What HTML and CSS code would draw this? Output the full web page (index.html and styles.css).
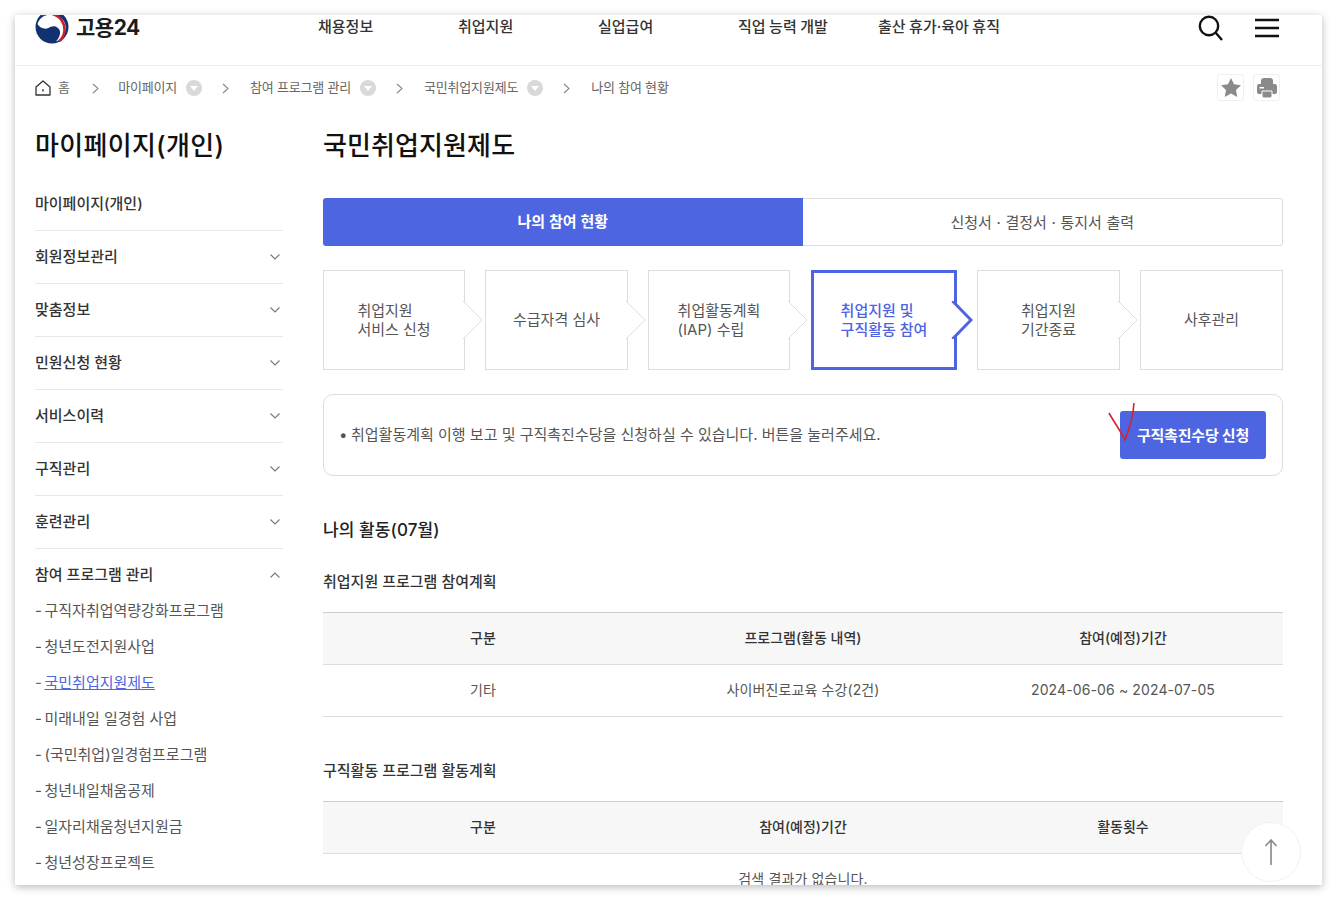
FILE: index.html
```html
<!DOCTYPE html>
<html lang="ko">
<head>
<meta charset="utf-8">
<title>고용24</title>
<link rel="stylesheet" href="styles.css">
</head>
<body>
<div class="card">
  <header class="header">
    <div class="logo">
      <svg class="logo-mark" width="34" height="34" viewBox="0 0 34 34">
        <circle cx="17" cy="17" r="16.500" fill="#12316f"/>
        <path d="M2.500 14 C5 6 13 3 21 5.500 C30 8 33 17 29 24.500 C27 28 24 30.500 21 31.500 C25 27 26.500 22 23.500 18.500 C20 15 16 16.500 13.500 18 C10 19.500 5 18.500 2.500 14Z" fill="#fff"/>
        <path d="M6.500 5 A16 16 0 0 1 24.500 31" fill="none" stroke="#c8202f" stroke-width="2.600"/>
      </svg>
      <span class="logo-text">고용24</span>
    </div>
    <nav class="nav">
      <a class="nav-item">채용정보</a>
      <a class="nav-item">취업지원</a>
      <a class="nav-item">실업급여</a>
      <a class="nav-item">직업 능력 개발</a>
      <a class="nav-item">출산 휴가·육아 휴직</a>
    </nav>
    <div class="header-icons">
      <svg width="26" height="26" viewBox="0 0 26 26" fill="none" stroke="#111" stroke-width="2.400"><circle cx="11" cy="11" r="9.200"/><path d="M17.500 17.500 L24 25"/></svg>
      <svg width="24" height="20" viewBox="0 0 24 20" stroke="#111" stroke-width="2.400"><path d="M0 2H24M0 10H24M0 18H24"/></svg>
    </div>
  </header>

  <div class="crumbs">
    <svg class="home" width="16" height="16" viewBox="0 0 16 16" fill="none" stroke="#333" stroke-width="1.300"><path d="M1 7 L8 1 L15 7 V15 H1Z" stroke-linejoin="round"/><path d="M8 9V11.500"/></svg>
    <span class="crumb crumb-home">홈</span>
    <svg class="sep" width="7" height="11" viewBox="0 0 7 11" fill="none" stroke="#888" stroke-width="1.100"><path d="M1 1 L6 5.500 L1 10"/></svg>
    <span class="crumb">마이페이지</span>
    <span class="dot"></span>
    <svg class="sep" width="7" height="11" viewBox="0 0 7 11" fill="none" stroke="#888" stroke-width="1.100"><path d="M1 1 L6 5.500 L1 10"/></svg>
    <span class="crumb">참여 프로그램 관리</span>
    <span class="dot"></span>
    <svg class="sep" width="7" height="11" viewBox="0 0 7 11" fill="none" stroke="#888" stroke-width="1.100"><path d="M1 1 L6 5.500 L1 10"/></svg>
    <span class="crumb">국민취업지원제도</span>
    <span class="dot"></span>
    <svg class="sep" width="7" height="11" viewBox="0 0 7 11" fill="none" stroke="#888" stroke-width="1.100"><path d="M1 1 L6 5.500 L1 10"/></svg>
    <span class="crumb">나의 참여 현황</span>
    <div class="crumb-tools">
      <span class="tool"><svg width="20" height="19" viewBox="0 0 20 19" fill="#8a8a8a"><path d="M10 0 L13 6.300 L20 7.200 L15 12 L16.200 19 L10 15.600 L3.800 19 L5 12 L0 7.200 L7 6.300Z"/></svg></span>
      <span class="tool"><svg width="20" height="20" viewBox="0 0 20 20"><path fill="#8a8a8a" d="M7 0 H13 Q16 0 16 3 V6 H18 Q20 6 20 9 V14 Q20 16 17 16 H3 Q0 16 0 14 V9 Q0 6 2 6 H4 V3 Q4 0 7 0Z"/><path fill="#fff" d="M2.500 9 H7 V10.500 H2.500Z"/><path fill="#8a8a8a" stroke="#fff" d="M5 13 H15 V18 Q15 20 13 20 H7 Q5 20 5 18Z"/></svg></span>
    </div>
  </div>

  <div class="main">
    <aside class="side">
      <h2 class="side-title">마이페이지(개인)</h2>
      <ul class="side-menu">
        <li class="side-row">마이페이지(개인)</li>
        <li class="side-row">회원정보관리<svg class="chev" width="10" height="6" viewBox="0 0 10 6" fill="none" stroke="#777" stroke-width="1.100"><path d="M0.500 0.500 L5 5 L9.500 0.500"/></svg></li>
        <li class="side-row">맞춤정보<svg class="chev" width="10" height="6" viewBox="0 0 10 6" fill="none" stroke="#777" stroke-width="1.100"><path d="M0.500 0.500 L5 5 L9.500 0.500"/></svg></li>
        <li class="side-row">민원신청 현황<svg class="chev" width="10" height="6" viewBox="0 0 10 6" fill="none" stroke="#777" stroke-width="1.100"><path d="M0.500 0.500 L5 5 L9.500 0.500"/></svg></li>
        <li class="side-row">서비스이력<svg class="chev" width="10" height="6" viewBox="0 0 10 6" fill="none" stroke="#777" stroke-width="1.100"><path d="M0.500 0.500 L5 5 L9.500 0.500"/></svg></li>
        <li class="side-row">구직관리<svg class="chev" width="10" height="6" viewBox="0 0 10 6" fill="none" stroke="#777" stroke-width="1.100"><path d="M0.500 0.500 L5 5 L9.500 0.500"/></svg></li>
        <li class="side-row">훈련관리<svg class="chev" width="10" height="6" viewBox="0 0 10 6" fill="none" stroke="#777" stroke-width="1.100"><path d="M0.500 0.500 L5 5 L9.500 0.500"/></svg></li>
        <li class="side-row side-open">참여 프로그램 관리<svg class="chev" width="10" height="6" viewBox="0 0 10 6" fill="none" stroke="#777" stroke-width="1.100"><path d="M0.500 5.500 L5 1 L9.500 5.500"/></svg></li>
      </ul>
      <ul class="sub-menu">
        <li><span class="dash">-</span>구직자취업역량강화프로그램</li>
        <li><span class="dash">-</span>청년도전지원사업</li>
        <li class="sub-current"><span class="dash">-</span><u>국민취업지원제도</u></li>
        <li><span class="dash">-</span>미래내일 일경험 사업</li>
        <li><span class="dash">-</span>(국민취업)일경험프로그램</li>
        <li><span class="dash">-</span>청년내일채움공제</li>
        <li><span class="dash">-</span>일자리채움청년지원금</li>
        <li><span class="dash">-</span>청년성장프로젝트</li>
      </ul>
    </aside>

    <section class="content">
      <h1 class="page-title">국민취업지원제도</h1>
      <div class="tabs">
        <div class="tab tab-on">나의 참여 현황</div>
        <div class="tab">신청서 · 결정서 · 통지서 출력</div>
      </div>

      <div class="steps">
        <div class="step"><span>취업지원<br>서비스 신청</span><svg class="arrow" width="20" height="38" viewBox="0 0 20 38" fill="#fff" stroke="#ddd"><path d="M0 0 L19 19 L0 38"/></svg></div>
        <div class="step"><span>수급자격 심사</span><svg class="arrow" width="20" height="38" viewBox="0 0 20 38" fill="#fff" stroke="#ddd"><path d="M0 0 L19 19 L0 38"/></svg></div>
        <div class="step"><span>취업활동계획<br>(IAP) 수립</span><svg class="arrow" width="20" height="38" viewBox="0 0 20 38" fill="#fff" stroke="#ddd"><path d="M0 0 L19 19 L0 38"/></svg></div>
        <div class="step step-on"><span>취업지원 및<br>구직활동 참여</span><svg class="arrow arrow-on" width="22" height="38" viewBox="0 0 22 38"><path fill="#fff" d="M0 2 H3 L20 19 L3 36 H0Z"/><path fill="none" stroke="#4d65e1" stroke-width="3" d="M1.500 0 L20 19 L1.500 38"/></svg></div>
        <div class="step"><span>취업지원<br>기간종료</span><svg class="arrow" width="20" height="38" viewBox="0 0 20 38" fill="#fff" stroke="#ddd"><path d="M0 0 L19 19 L0 38"/></svg></div>
        <div class="step"><span>사후관리</span></div>
      </div>

      <div class="info">
        <p class="info-text"><span class="bullet">•</span>취업활동계획 이행 보고 및 구직촉진수당을 신청하실 수 있습니다. 버튼을 눌러주세요.</p>
        <a class="info-btn">구직촉진수당 신청</a>
        <svg class="check" width="32" height="44" viewBox="0 0 32 44" fill="none" stroke="#d8232a" stroke-width="1.600"><path d="M1 11 C6 20 12 28 17 38 C21 28 25 16 26 1"/></svg>
      </div>

      <h3 class="sec-title">나의 활동(07월)</h3>
      <h4 class="sub-title">취업지원 프로그램 참여계획</h4>
      <table class="tbl">
        <thead><tr><th>구분</th><th>프로그램(활동 내역)</th><th>참여(예정)기간</th></tr></thead>
        <tbody><tr><td>기타</td><td>사이버진로교육 수강(2건)</td><td>2024-06-06 ~ 2024-07-05</td></tr></tbody>
      </table>
      <h4 class="sub-title sub-title-2">구직활동 프로그램 활동계획</h4>
      <table class="tbl">
        <thead><tr><th>구분</th><th>참여(예정)기간</th><th>활동횟수</th></tr></thead>
        <tbody><tr><td colspan="3">검색 결과가 없습니다.</td></tr></tbody>
      </table>
    </section>
  </div>

  <a class="to-top"><svg width="14" height="26" viewBox="0 0 14 26" fill="none" stroke="#888" stroke-width="1.600"><path d="M7 26V1M1.500 7 L7 1 L12.500 7"/></svg></a>
</div>
</body>
</html>
```
FILE: styles.css
```css
* { box-sizing: border-box; }
html, body { margin: 0; padding: 0; height: 900px; overflow: hidden; background: #fff; }
body {
  font-family: Inter, "Noto Sans CJK KR", "Noto Sans", sans-serif;
  color: #222;
  padding: 15px;
}
ul { list-style: none; margin: 0; padding: 0; }
h1, h2, h3, h4, p { margin: 0; }

.card {
  position: relative;
  width: 1307px;
  height: 870px;
  overflow: hidden;
  background: #fff;
  box-shadow: 0 2px 8px rgba(0, 0, 0, .28);
}

.header {
  display: flex;
  height: 51px;
  padding-left: 20px;
  border-bottom: 1px solid #eee;
}
.logo { display: flex; align-items: flex-start; width: 283px; margin-top: -5px; }
.logo-mark { flex: none; }
.logo-text { margin-left: 7px; font-size: 21px; line-height: 36px; font-weight: 700; color: #1c1c1c; letter-spacing: -.5px; }
.nav { display: flex; }
.nav-item { width: 140px; font-size: 15px; line-height: 24px; font-weight: 500; color: #333; white-space: nowrap; word-spacing: -.5px; }
.header-icons { display: flex; align-items: flex-start; gap: 31px; margin-left: 180px; padding-top: 0; }
.header-icons svg:last-child { margin-top: 3px; }

.crumbs { display: flex; align-items: center; height: 44px; padding-left: 20px; font-size: 13px; line-height: 20px; color: #666; }
.crumb { white-space: nowrap; letter-spacing: -.2px; position: relative; top: -1px; }
.home { margin-right: 7px; }
.sep { margin: 0 21px 0 20px; }
.crumb-home + .sep { margin-left: 22px; margin-right: 19.500px; }
.dot { position: relative; width: 16px; height: 16px; margin-left: 9px; border-radius: 50%; background: #d9d9d9; }
.dot::after { content: ""; position: absolute; left: 4px; top: 6px; border-style: solid; border-width: 5px 4px 0; border-color: #fff transparent transparent; }
.crumb-tools { display: flex; gap: 9px; margin: -1px 42px 0 auto; }
.tool { display: flex; align-items: center; justify-content: center; width: 27px; height: 27px; border: 1px solid #f0f0f0; border-radius: 3px; }

.main { display: flex; padding: 0 39px 0 20px; gap: 40px; }
.side { flex: none; width: 248px; }
.side-title { font-size: 26px; line-height: 38px; font-weight: 500; letter-spacing: .3px; color: #111; margin: 17px 0 13px; }
.side-row { display: flex; justify-content: space-between; align-items: center; height: 53px; border-bottom: 1px solid #e8e8e8; font-size: 15px; line-height: 24px; font-weight: 500; color: #333; }
.side-open { border-bottom: 0; padding-bottom: 1px; }
.chev { margin-right: 3px; }
.sub-menu { margin-top: -9px; }
.sub-menu li { height: 36px; line-height: 36px; font-size: 15px; color: #555; white-space: nowrap; }
.dash { display: inline-block; width: 9.500px; }
.sub-current { color: #4d65e1 !important; }

.content { flex: none; width: 960px; }
.page-title { font-size: 26px; line-height: 38px; font-weight: 500; letter-spacing: .1px; color: #111; margin: 17px 0 33px; }

.tabs { display: flex; height: 48px; line-height: 22px; }
.tab { flex: 1; display: flex; align-items: center; justify-content: center; padding-top: 1px; font-size: 15px; word-spacing: .4px; color: #555; border: 1px solid #ddd; border-left: 0; border-radius: 0 3px 3px 0; }
.tab-on { padding-top: 0; background: #4d65e1; border: 0; border-radius: 3px 0 0 3px; color: #fff; font-weight: 700; }

.steps { display: grid; grid-template-columns: 142px 143px 142px 147px 143px 143px; gap: 20px; margin-top: 24px; }
.step { position: relative; display: flex; align-items: center; justify-content: center; height: 100px; padding-bottom: 1px; border: 1px solid #ddd; font-size: 15px; line-height: 19px; color: #555; }
.step-on { margin-left: 1px; border: 3px solid #4d65e1; color: #4d65e1; font-weight: 500; }
.arrow { position: absolute; left: 100%; top: 30px; margin-left: -1px; }
.arrow-on { top: 28px; margin-left: -3px; }

.info { position: relative; display: flex; align-items: center; justify-content: space-between; height: 82px; margin-top: 24px; padding: 0 16px; border: 1px solid #ddd; border-radius: 10px; }
.info-text { margin-left: -1px; font-size: 15px; line-height: 22px; color: #555; white-space: nowrap; }
.bullet { display: inline-block; width: 12px; }
.info-btn { display: flex; align-items: center; justify-content: center; width: 146px; height: 48px; padding-top: 2px; border-radius: 3px; background: #4d65e1; color: #fff; font-size: 15px; line-height: 22px; font-weight: 700; letter-spacing: -.2px; }
.check { position: absolute; left: 784px; top: 7px; }

.sec-title { margin-top: 41px; font-size: 17px; line-height: 26px; font-weight: 500; letter-spacing: .1px; color: #222; }
.sub-title { margin-top: 27px; margin-bottom: -1px; font-size: 15px; line-height: 24px; font-weight: 500; color: #333; }
.sub-title-2 { margin-top: 42px; }

.tbl { width: 960px; margin-top: 19px; border-collapse: collapse; table-layout: fixed; border-top: 1px solid #ccc; font-size: 14px; line-height: 20px; }
.tbl th { height: 52px; padding: 0 0 1px; background: #f7f7f7; border-bottom: 1px solid #ddd; font-weight: 500; color: #333; }
.tbl td { height: 52px; padding: 0 0 1px; border-bottom: 1px solid #ddd; text-align: center; letter-spacing: .12px; color: #555; }

.to-top { position: absolute; left: 1226px; top: 807px; display: flex; align-items: center; justify-content: center; width: 60px; height: 60px; border: 1px solid #f2f2f2; border-radius: 50%; background: #fff; }
```
